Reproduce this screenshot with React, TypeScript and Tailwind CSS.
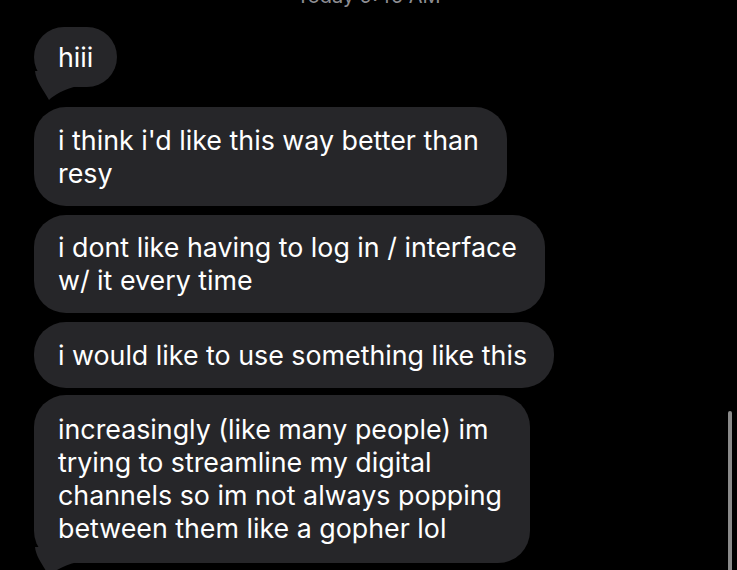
const messages = [
  { lines: ["hiii"], tail: true, pad: "py-[13.5px] pr-[24px]" },
  { lines: ["i think i'd like this way better than", "resy"], pad: "py-[16.5px] pr-[28px]" },
  {
    lines: ["i dont like having to log in / interface", "w/ it every time"],
    pad: "py-[16px] pr-[28px]",
  },
  { lines: ["i would like to use something like this"], pad: "py-[16.5px] pr-[27px]" },
  {
    lines: [
      "increasingly (like many people) im",
      "trying to streamline my digital",
      "channels so im not always popping",
      "between them like a gopher lol",
    ],
    tail: true,
    pad: "py-[18px] pr-[28px] mt-[-2px]",
  },
];

function Tail() {
  return (
    <svg
      className="absolute left-0 bottom-[-14px]"
      width="44"
      height="30"
      viewBox="0 0 44 30"
    >
      <path
        d="M1 0 C2 10 9 18 15 29 C20 24 30 18 44 15 L44 0 Z"
        fill="#262629"
      />
    </svg>
  );
}

export default function App() {
  return (
    <div
      className="relative h-[570px] w-[737px] overflow-hidden bg-black"
      style={{ fontFamily: "Inter, 'Liberation Sans', sans-serif" }}
    >
      <div className="mt-[-16px] text-center text-[20px] leading-[24px] text-[#8e8e93]">
        Today 9:45 AM
      </div>
      <div className="mt-[19px] flex flex-col items-start gap-[9px] pl-[34px]">
        {messages.map((m, i) => (
          <div
            key={i}
            className={`relative rounded-[32px] bg-[#262629] pl-[24px] text-[26.8px] leading-[33px] text-white whitespace-nowrap ${m.pad} ${
              m.tail ? "mb-[11px]" : ""
            }`}
          >
            {m.tail && <Tail />}
            <div className="relative">
              {m.lines.map((l, j) => (
                <div key={j}>{l}</div>
              ))}
            </div>
          </div>
        ))}
      </div>
      <div className="absolute right-[5px] top-[411px] h-[180px] w-[4px] rounded-full bg-[#8a8a8a]" />
    </div>
  );
}
